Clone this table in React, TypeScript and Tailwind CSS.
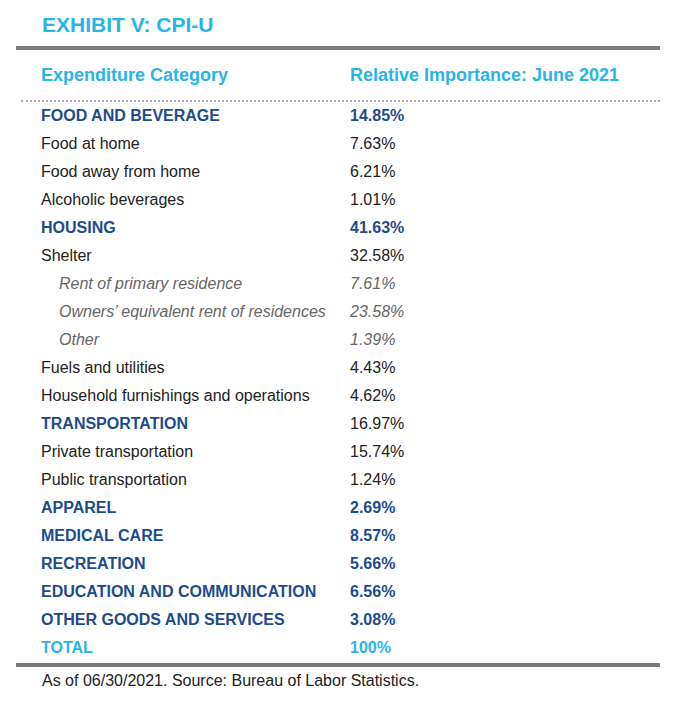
import React from 'react';

type Kind = 'section' | 'item' | 'sub' | 'total';

interface Row {
  label: string;
  value: string;
  kind: Kind;
  plainValue?: boolean;
}

const rows: Row[] = [
  { label: 'FOOD AND BEVERAGE', value: '14.85%', kind: 'section' },
  { label: 'Food at home', value: '7.63%', kind: 'item' },
  { label: 'Food away from home', value: '6.21%', kind: 'item' },
  { label: 'Alcoholic beverages', value: '1.01%', kind: 'item' },
  { label: 'HOUSING', value: '41.63%', kind: 'section' },
  { label: 'Shelter', value: '32.58%', kind: 'item' },
  { label: 'Rent of primary residence', value: '7.61%', kind: 'sub' },
  { label: 'Owners\u2019 equivalent rent of residences', value: '23.58%', kind: 'sub' },
  { label: 'Other', value: '1.39%', kind: 'sub' },
  { label: 'Fuels and utilities', value: '4.43%', kind: 'item' },
  { label: 'Household furnishings and operations', value: '4.62%', kind: 'item' },
  { label: 'TRANSPORTATION', value: '16.97%', kind: 'section', plainValue: true },
  { label: 'Private transportation', value: '15.74%', kind: 'item' },
  { label: 'Public transportation', value: '1.24%', kind: 'item' },
  { label: 'APPAREL', value: '2.69%', kind: 'section' },
  { label: 'MEDICAL CARE', value: '8.57%', kind: 'section' },
  { label: 'RECREATION', value: '5.66%', kind: 'section' },
  { label: 'EDUCATION AND COMMUNICATION', value: '6.56%', kind: 'section' },
  { label: 'OTHER GOODS AND SERVICES', value: '3.08%', kind: 'section' },
  { label: 'TOTAL', value: '100%', kind: 'total' }
];

const labelClass: Record<Kind, string> = {
  section: 'font-bold text-[#1d4c8c]',
  item: 'text-[#222]',
  sub: 'italic text-[#666] pl-[18px]',
  total: 'font-bold text-[#2ab4e6]'
};

const valueClass: Record<Kind, string> = {
  section: 'font-bold text-[#1d4c8c]',
  item: 'text-[#222]',
  sub: 'italic text-[#666]',
  total: 'font-bold text-[#2ab4e6]'
};

const App: React.FC = () => {
  return (
    <div className="w-[693px] h-[711px] bg-white font-['Liberation_Sans',Arial,sans-serif]">
      <div className="pl-[16px] w-[660px]">
        <h1 className="pt-[14px] mb-[10px] pl-[26px] leading-[22px] text-[21px] font-bold text-[#2ab4e6]">
          EXHIBIT V: CPI-U
        </h1>
        <div className="h-[4px] bg-[#7a7a7a]" />
        <div className="h-[50px] flex items-center pl-[25px] text-[18px] font-bold text-[#2ab4e6]">
          <div className="w-[309px]">Expenditure Category</div>
          <div>Relative Importance: June 2021</div>
        </div>
        <div className="ml-[5px] border-t-2 border-dotted border-[#aaa]" />
        <div className="pl-[25px] text-[16px]">
          {rows.map((r) => (
            <div key={r.label} className="flex h-[28px] items-center leading-[28px]">
              <div className={`w-[309px] ${labelClass[r.kind]}`}>{r.label}</div>
              <div className={r.plainValue ? 'text-[#222]' : valueClass[r.kind]}>{r.value}</div>
            </div>
          ))}
        </div>
        <div className="mt-[1px] h-[4px] bg-[#7a7a7a]" />
        <p className="pt-[4px] pl-[26px] leading-[20px] text-[16px] text-[#222]">
          As of 06/30/2021. Source: Bureau of Labor Statistics.
        </p>
      </div>
    </div>
  );
};

export default App;
